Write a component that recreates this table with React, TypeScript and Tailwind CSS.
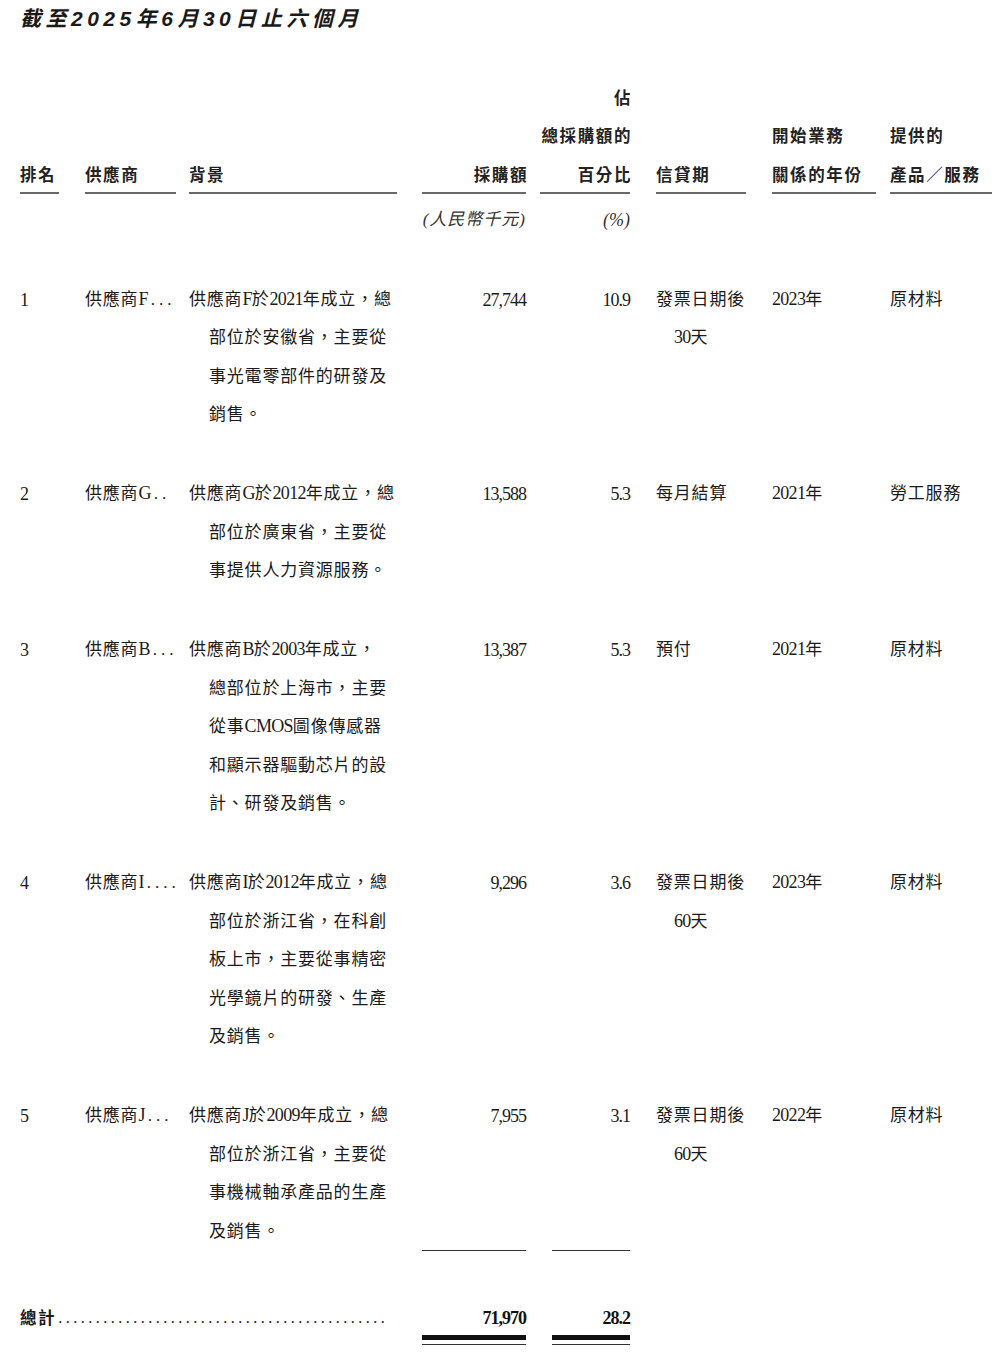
import React from "react";

const SERIF = "font-['Liberation_Serif','Noto_Sans_CJK_TC',serif]";
const SANS = "font-['Liberation_Sans','Noto_Sans_CJK_TC',sans-serif]";

type Row = {
  rank: string;
  name: string;
  dots: string;
  bg: string[];
  amt: string;
  pct: string;
  credit: string[];
  year: string;
  product: string;
};

const rows: Row[] = [
  {
    rank: "1",
    name: "供應商F",
    dots: "...",
    bg: ["供應商F於2021年成立，總", "部位於安徽省，主要從", "事光電零部件的研發及", "銷售。"],
    amt: "27,744",
    pct: "10.9",
    credit: ["發票日期後", "30天"],
    year: "2023年",
    product: "原材料",
  },
  {
    rank: "2",
    name: "供應商G",
    dots: "..",
    bg: ["供應商G於2012年成立，總", "部位於廣東省，主要從", "事提供人力資源服務。"],
    amt: "13,588",
    pct: "5.3",
    credit: ["每月結算"],
    year: "2021年",
    product: "勞工服務",
  },
  {
    rank: "3",
    name: "供應商B",
    dots: "...",
    bg: [
      "供應商B於2003年成立，",
      "總部位於上海市，主要",
      "從事CMOS圖像傳感器",
      "和顯示器驅動芯片的設",
      "計、研發及銷售。",
    ],
    amt: "13,387",
    pct: "5.3",
    credit: ["預付"],
    year: "2021年",
    product: "原材料",
  },
  {
    rank: "4",
    name: "供應商I",
    dots: "....",
    bg: [
      "供應商I於2012年成立，總",
      "部位於浙江省，在科創",
      "板上市，主要從事精密",
      "光學鏡片的研發、生產",
      "及銷售。",
    ],
    amt: "9,296",
    pct: "3.6",
    credit: ["發票日期後", "60天"],
    year: "2023年",
    product: "原材料",
  },
  {
    rank: "5",
    name: "供應商J",
    dots: "...",
    bg: ["供應商J於2009年成立，總", "部位於浙江省，主要從", "事機械軸承產品的生產", "及銷售。"],
    amt: "7,955",
    pct: "3.1",
    credit: ["發票日期後", "60天"],
    year: "2022年",
    product: "原材料",
  },
];

// Split text into latin / CJK runs so latin runs get tighter spacing
function Mixed({ text }: { text: string }) {
  const parts = text.match(/[\x00-\x7F]+|[^\x00-\x7F]+/g) || [];
  return (
    <>
      {parts.map((p, i) =>
        /^[\x00-\x7F]+$/.test(p) ? (
          <span key={i} className="tracking-[-0.7px] text-[18px] leading-none">
            {p}
          </span>
        ) : (
          <span key={i} className="tracking-[0.8px] leading-none">
            {p}
          </span>
        )
      )}
    </>
  );
}

function HeadCell({ lines, width, right }: { lines: string[]; width: string; right?: boolean }) {
  return (
    <div className={`flex flex-col ${width}`}>
      <div
        className={`${SANS} text-[16.5px] font-bold tracking-[1.6px] leading-[38.5px] text-[#222] ${right ? "text-right -mr-[2px]" : ""}`}
      >
        {lines.map((l, i) => (
          <div key={i} className="h-[38.5px] whitespace-nowrap">
            {l}
          </div>
        ))}
      </div>
      <div className="-mt-[2px] h-[2px] bg-[#6a6a6a]" />
    </div>
  );
}

export default function App() {
  return (
    <div className="w-[1000px] min-h-[1355px] bg-white pl-[20px] text-[#1c1a1a]">
      {/* Title */}
      <div
        className={`h-[38px] leading-[38px] ${SANS} text-[21px] font-bold italic tracking-[4.5px] text-[#1a1a1a] whitespace-nowrap`}
      >
        截至2025年6月30日止六個月
      </div>

      {/* Header */}
      <div className="mt-[40.75px] grid grid-cols-[65px_104px_233px_118px_116px_116px_118px_102px] items-end">
        <HeadCell lines={["排名"]} width="w-[39px]" />
        <HeadCell lines={["供應商"]} width="w-[91px]" />
        <HeadCell lines={["背景"]} width="w-[208px]" />
        <HeadCell lines={["採購額"]} width="w-[104px]" right />
        <HeadCell lines={["佔", "總採購額的", "百分比"]} width="w-[90px]" right />
        <HeadCell lines={["信貸期"]} width="w-[90px]" />
        <HeadCell lines={["開始業務", "關係的年份"]} width="w-[104px]" />
        <HeadCell lines={["提供的", "產品／服務"]} width="w-[102px]" />
      </div>

      {/* Units */}
      <div
        className={`mt-[6.5px] grid h-[38.5px] grid-cols-[65px_104px_233px_118px_116px_116px_118px_102px] ${SERIF} italic text-[17px] leading-[38.5px] text-[#333]`}
      >
        <div />
        <div />
        <div />
        <div className="w-[104px] whitespace-nowrap text-right tracking-[1px]">(人民幣千元)</div>
        <div className="w-[90px] whitespace-nowrap text-right text-[18px]">(%)</div>
      </div>

      {/* Body */}
      <div
        className={`mt-[41.5px] grid grid-cols-[65px_104px_233px_118px_116px_116px_118px_102px] gap-y-[40.5px] ${SERIF} text-[17px] leading-[38.5px]`}
      >
        {rows.map((r, idx) => {
          const last = idx === rows.length - 1;
          return (
            <React.Fragment key={r.rank}>
              <div className="h-[38.5px] text-[18px]">{r.rank}</div>
              <div className="h-[38.5px] whitespace-nowrap">
                <Mixed text={r.name} />
                <span className="tracking-[4px] pl-[3px] leading-none">{r.dots}</span>
              </div>
              <div className="w-[208px]">
                {r.bg.map((l, i) => (
                  <div key={i} className={`h-[38.5px] whitespace-nowrap ${i > 0 ? "pl-[20px]" : ""}`}>
                    <Mixed text={l} />
                  </div>
                ))}
              </div>
              <div className="flex w-[104px] flex-col justify-between">
                <div className="h-[38.5px] text-right text-[18px] tracking-[-1px]">{r.amt}</div>
                {last && <div className="h-px bg-[#333]" />}
              </div>
              <div className="flex w-[90px] flex-col justify-between">
                <div className="h-[38.5px] text-right text-[18px] tracking-[-1px]">{r.pct}</div>
                {last && <div className="ml-auto h-px w-[78px] bg-[#333]" />}
              </div>
              <div className="w-[90px]">
                {r.credit.map((l, i) => (
                  <div key={i} className={`h-[38.5px] whitespace-nowrap ${i > 0 ? "pl-[18px]" : ""}`}>
                    <Mixed text={l} />
                  </div>
                ))}
              </div>
              <div className="h-[38.5px] whitespace-nowrap">
                <Mixed text={r.year} />
              </div>
              <div className="h-[38.5px] whitespace-nowrap">
                <Mixed text={r.product} />
              </div>
            </React.Fragment>
          );
        })}
      </div>

      {/* Total */}
      <div className="mt-[47.5px] grid grid-cols-[65px_104px_233px_118px_116px_116px_118px_102px] leading-[38.5px]">
        <div className="col-span-3 flex h-[38.5px] w-[372px] overflow-hidden whitespace-nowrap">
          <span className={`${SANS} text-[16.5px] font-bold tracking-[1.6px] text-[#1a1a1a]`}>總計</span>
          <span className={`${SERIF} text-[16px] tracking-[3.5px] pl-[2px]`}>{".".repeat(44)}</span>
        </div>
        <div className="flex w-[104px] flex-col">
          <div className={`${SERIF} h-[38.5px] text-right text-[18px] font-bold tracking-[-1px] text-[#111]`}>71,970</div>
          <div className="-mt-[2px] h-[4.5px] bg-[#111]" />
          <div className="mt-[4px] h-[1.5px] bg-[#333]" />
        </div>
        <div className="flex w-[90px] flex-col items-end">
          <div className={`${SERIF} h-[38.5px] text-right text-[18px] font-bold tracking-[-1px] text-[#111]`}>28.2</div>
          <div className="-mt-[2px] h-[4.5px] w-[78px] bg-[#111]" />
          <div className="mt-[4px] h-[1.5px] w-[78px] bg-[#333]" />
        </div>
      </div>
    </div>
  );
}
